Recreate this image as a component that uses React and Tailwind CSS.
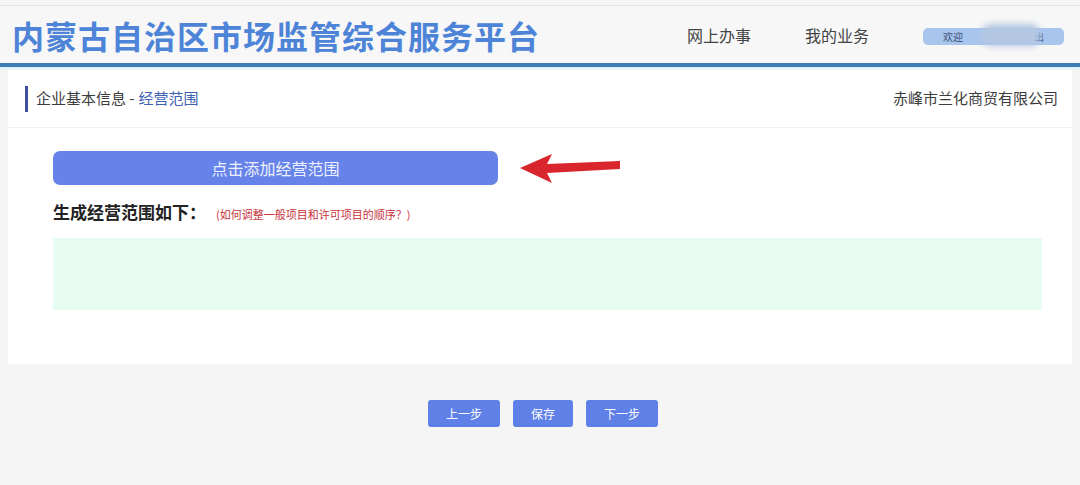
import React from 'react';

const font = { fontFamily: '"Noto Sans CJK SC", "Noto Sans", sans-serif' };

function Header() {
  return (
    <div className="bg-[#f7f7f7] border-t border-[#e6e6e6] mt-[5px]">
      <div className="h-[57px] flex items-center pl-[12px] pr-[16px]">
        <h1 className="text-[32px] leading-none font-bold text-[#4d84d8] tracking-[1px]">
          内蒙古自治区市场监管综合服务平台
        </h1>
        <div className="ml-auto flex items-center">
          <a className="text-[16px] text-[#444] mr-[54px]">网上办事</a>
          <a className="text-[16px] text-[#444] mr-[54px]">我的业务</a>
          <div className="relative w-[141px] h-[17px] mt-[4px] rounded-[5px] bg-[#a9c5ee] flex items-center justify-between px-[20px] text-[10px] text-[#3a4f78]">
            <span>欢迎</span>
            <span>出</span>
            <div className="absolute left-[58px] top-[-4px] w-[60px] h-[22px] rounded-full bg-[#b3c7e2] blur-[3px]"></div>
          </div>
        </div>
      </div>
      <div className="h-[4px] bg-[#3d7db8]"></div>
      <div className="h-[2px] bg-[#dff1fb]"></div>
    </div>
  );
}

function Arrow() {
  return (
    <svg width="104" height="32" viewBox="0 0 104 32" className="ml-[20px]">
      <path d="M2 16 L34 2 L29 12 L102 9 L102 17 L29 21 L34 31 Z" fill="#d9252c" />
    </svg>
  );
}

export default function App() {
  return (
    <div style={font} className="w-[1080px] h-[485px] bg-[#f5f5f5] overflow-hidden">
      <Header />
      <div className="mx-[8px] mt-[1px] bg-white h-[294px]">
        <div className="h-[58px] flex items-center pl-[17px] pr-[14px] border-b border-[#f0f0f0]">
          <div className="w-[3px] h-[26px] bg-[#3d4f9a] mr-[8px]"></div>
          <span className="text-[15px] text-[#3c3c3c]">企业基本信息 - </span>
          <span className="text-[15px] text-[#3d62b3] ml-[4px]">经营范围</span>
          <span className="ml-auto text-[15px] text-[#3c3c3c]">赤峰市兰化商贸有限公司</span>
        </div>
        <div className="pl-[45px] pt-[23px]">
          <div className="flex items-center">
            <button className="w-[445px] h-[34px] rounded-[7px] bg-[#6583e8] text-[16px] text-[#eef1ff]">
              点击添加经营范围
            </button>
            <Arrow />
          </div>
          <div className="mt-[14px] flex items-baseline">
            <span className="text-[17px] font-bold text-[#222]">生成经营范围如下：</span>
            <span className="text-[11px] text-[#c8323a] ml-[10px]">(如何调整一般项目和许可项目的顺序？)</span>
          </div>
          <div className="mt-[13px] w-[989px] h-[72px] bg-[#e8fdf1]"></div>
        </div>
      </div>
      <div className="flex justify-center gap-[13px] mt-[36px] pl-[6px]">
        <button className="w-[72px] h-[27px] rounded-[3px] bg-[#5e80e7] text-[12px] text-white">上一步</button>
        <button className="w-[60px] h-[27px] rounded-[3px] bg-[#5e80e7] text-[12px] text-white">保存</button>
        <button className="w-[72px] h-[27px] rounded-[3px] bg-[#5e80e7] text-[12px] text-white">下一步</button>
      </div>
    </div>
  );
}
